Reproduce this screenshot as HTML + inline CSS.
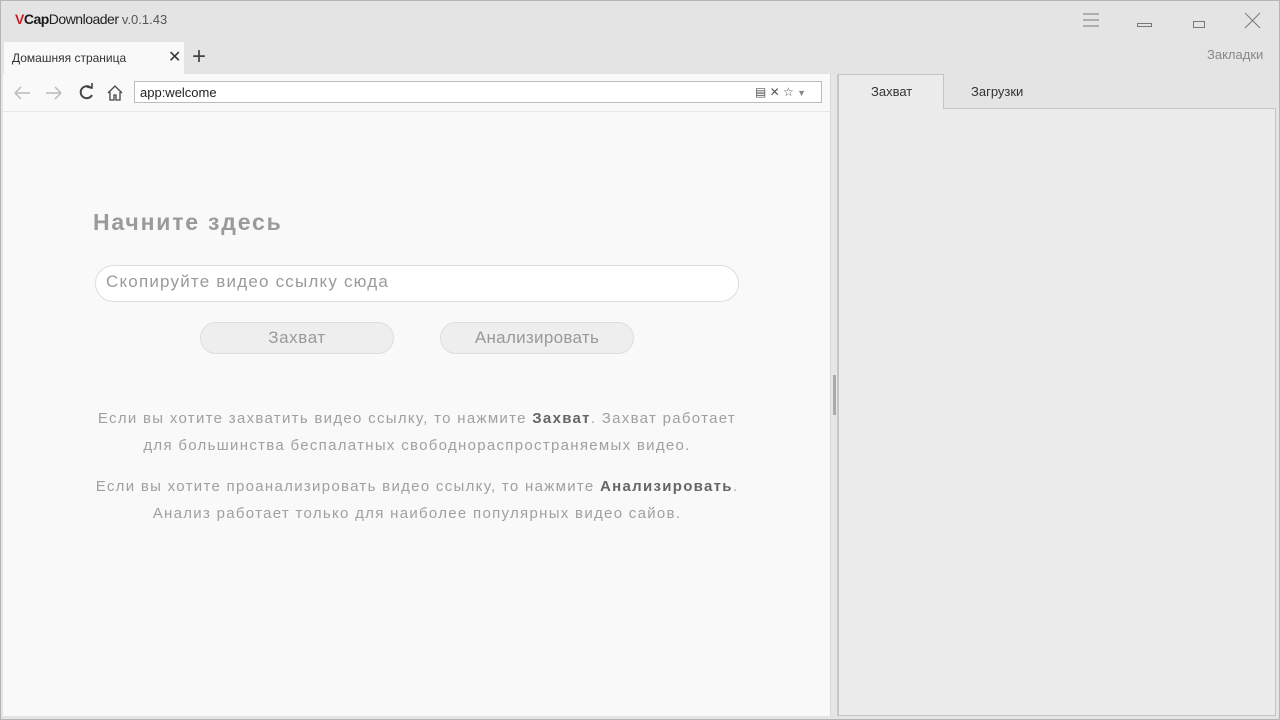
<!DOCTYPE html>
<html><head><meta charset="utf-8"><style>
*{margin:0;padding:0;box-sizing:border-box}
body{width:1280px;height:720px;overflow:hidden;background:#e3e4e3;font-family:"Liberation Sans","DejaVu Sans",sans-serif;position:relative}
.abs{position:absolute}
.t{color:#444;font-size:13px}
</style></head><body>
<div class="abs" style="left:0;top:0;width:1280px;height:720px;border:1px solid #b5b5b5"></div>
<div class="abs" style="left:15px;top:11px;font-size:14px;letter-spacing:-0.5px"><b style="color:#d21d24">V</b><b style="color:#1a1a1a">Cap</b><span style="color:#222">Downloader</span> <span style="color:#555;font-size:13px;letter-spacing:0">v.0.1.43</span></div>
<svg class="abs" style="left:1080px;top:10px" width="190" height="22">
<g stroke="#777" stroke-width="1" fill="none">
<line x1="3" y1="4" x2="19" y2="4"/><line x1="3" y1="10" x2="19" y2="10"/><line x1="3" y1="16" x2="19" y2="16"/>
<rect x="57.5" y="13.5" width="14" height="3"/>
<rect x="113.5" y="11.5" width="11" height="6"/>
<line x1="165" y1="3" x2="180" y2="18"/><line x1="180" y1="3" x2="165" y2="18"/>
</g></svg>
<div class="abs" style="left:1207px;top:47px;font-size:13px;color:#888">Закладки</div>
<div class="abs" style="left:4px;top:42px;width:180px;height:32px;background:#f9f9f9"></div>
<div class="abs t" style="left:12px;top:51px;font-size:12px;color:#333">Домашняя страница</div>
<div class="abs" style="left:168px;top:47px;font-size:16px;color:#333">✕</div>
<div class="abs" style="left:192px;top:43px;font-size:24px;color:#444;font-weight:300">+</div>
<div class="abs" style="left:3px;top:74px;width:827px;height:642px;background:#f9f9f9"></div>
<div class="abs" style="left:3px;top:111px;width:827px;height:1px;background:#e6e6e6"></div>
<svg class="abs" style="left:12px;top:83px" width="118" height="20" fill="none" stroke-width="1.5">
<path d="M3 10H18M3 10L9 4M3 10L9 16" stroke="#bbb"/>
<path d="M49 10H34M49 10L43 4M49 10L43 16" stroke="#bbb"/>
<path d="M79 5A6 6 0 1 0 80 12" stroke="#444" stroke-width="2"/><path d="M75 4L80 5L80 0" stroke="#444" stroke-width="1.6"/>
<path d="M96 10L103 3L110 10M98 9V17H102V12H104V17H108V9" stroke="#444" stroke-width="1.3"/>
</svg>
<div class="abs" style="left:134px;top:81px;width:688px;height:22px;background:#fff;border:1px solid #bcbcbc"></div>
<div class="abs" style="left:140px;top:85px;font-size:13px;color:#222">app:welcome</div>
<div class="abs" style="left:755px;top:85px;font-size:12px;color:#555">▤ ✕ ☆ <span style="font-size:9px;color:#888">▼</span></div>
<div class="abs" style="left:93px;top:209px;font-size:23px;font-weight:bold;color:#9a9a9a;letter-spacing:1.8px">Начните здесь</div>
<div class="abs" style="left:95px;top:265px;width:644px;height:37px;background:#fff;border:1px solid #ddd;border-radius:19px"></div>
<div class="abs" style="left:106px;top:272px;font-size:17px;color:#9a9a9a;letter-spacing:1.2px">Скопируйте видео ссылку сюда</div>
<div class="abs" style="left:200px;top:322px;width:194px;height:32px;background:#eee;border:1px solid #ddd;border-radius:16px;text-align:center;line-height:30px;font-size:17px;color:#999;letter-spacing:0.6px">Захват</div>
<div class="abs" style="left:440px;top:322px;width:194px;height:32px;background:#eee;border:1px solid #ddd;border-radius:16px;text-align:center;line-height:30px;font-size:17px;color:#999;letter-spacing:0.3px">Анализировать</div>
<div class="abs" style="left:20px;top:405px;width:794px;text-align:center;font-size:15px;line-height:27px;color:#a0a0a0;letter-spacing:1.3px">Если вы хотите захватить видео ссылку, то нажмите <b style="color:#666">Захват</b>. Захват работает<br>для большинства беспалатных свободнораспространяемых видео.</div>
<div class="abs" style="left:20px;top:473px;width:794px;text-align:center;font-size:15px;line-height:27px;color:#a0a0a0;letter-spacing:1.3px">Если вы хотите проанализировать видео ссылку, то нажмите <b style="color:#666">Анализировать</b>.<br>Анализ работает только для наиболее популярных видео сайов.</div>
<div class="abs" style="left:830px;top:74px;width:8px;height:642px;background:#e6e6e6;border-left:1px solid #d8d8d8;border-right:1px solid #c8c8c8"></div>
<div class="abs" style="left:833px;top:375px;width:3px;height:40px;background:#aaa"></div>
<div class="abs" style="left:838px;top:108px;width:438px;height:608px;background:#ebeceb;border:1px solid #c4c4c4"></div>
<div class="abs" style="left:838px;top:74px;width:106px;height:35px;background:#ebeceb;border:1px solid #c4c4c4;border-bottom:none"></div>
<div class="abs" style="left:871px;top:84px;font-size:13px;color:#333">Захват</div>
<div class="abs" style="left:971px;top:84px;font-size:13px;color:#333">Загрузки</div>
</body></html>
